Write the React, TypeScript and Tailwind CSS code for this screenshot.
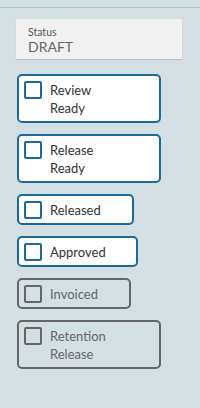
import React from "react";

type Item = { lines: string[]; w: string; disabled?: boolean };

const items: Item[] = [
  { lines: ["Review", "Ready"], w: "w-[144px]" },
  { lines: ["Release", "Ready"], w: "w-[144px]" },
  { lines: ["Released"], w: "w-[117px]" },
  { lines: ["Approved"], w: "w-[121px]" },
  { lines: ["Invoiced"], w: "w-[114px]", disabled: true },
  { lines: ["Retention", "Release"], w: "w-[144px]", disabled: true },
];

function Card({ item }: { item: Item }) {
  const d = item.disabled;
  return (
    <div
      className={`${item.w} flex items-start gap-[8px] rounded-[5px] border-2 pl-[5px] pt-[5px] pb-[4px] ${
        d ? "border-[#656565] bg-transparent" : "border-[#1a6a9b] bg-white"
      }`}
    >
      <div
        className={`h-[18px] w-[18px] shrink-0 rounded-[2px] border-2 ${
          d ? "border-[#656565]" : "border-[#1a6a9b] bg-white"
        }`}
      />
      <div
        className={`text-[13px] leading-[18px] ${
          d ? "text-[#666666]" : "text-[#333333]"
        }`}
      >
        {item.lines.map((l) => (
          <div key={l}>{l}</div>
        ))}
      </div>
    </div>
  );
}

export default function App() {
  return (
    <div
      className="h-[408px] w-[200px] bg-[#d3dfe3]"
      style={{ fontFamily: "Lato, 'Noto Sans', sans-serif" }}
    >
      <div className="h-[8px] border-b border-[#a8c4cc]" />
      <div className="ml-[16px] mt-[11px] h-[40px] w-[166px] bg-[#f1f1f1] pl-[12px] pt-[7px] shadow-[0_1px_1px_rgba(0,0,0,0.12)]">
        <div className="text-[10.5px] leading-[12px] text-[#555555]">Status</div>
        <div className="mt-[1px] text-[14px] leading-[16px] text-[#666666]">DRAFT</div>
      </div>
      <div className="ml-[17px] mt-[15px] flex flex-col items-start gap-[11px]">
        {items.map((it) => (
          <Card key={it.lines.join(" ")} item={it} />
        ))}
      </div>
    </div>
  );
}
